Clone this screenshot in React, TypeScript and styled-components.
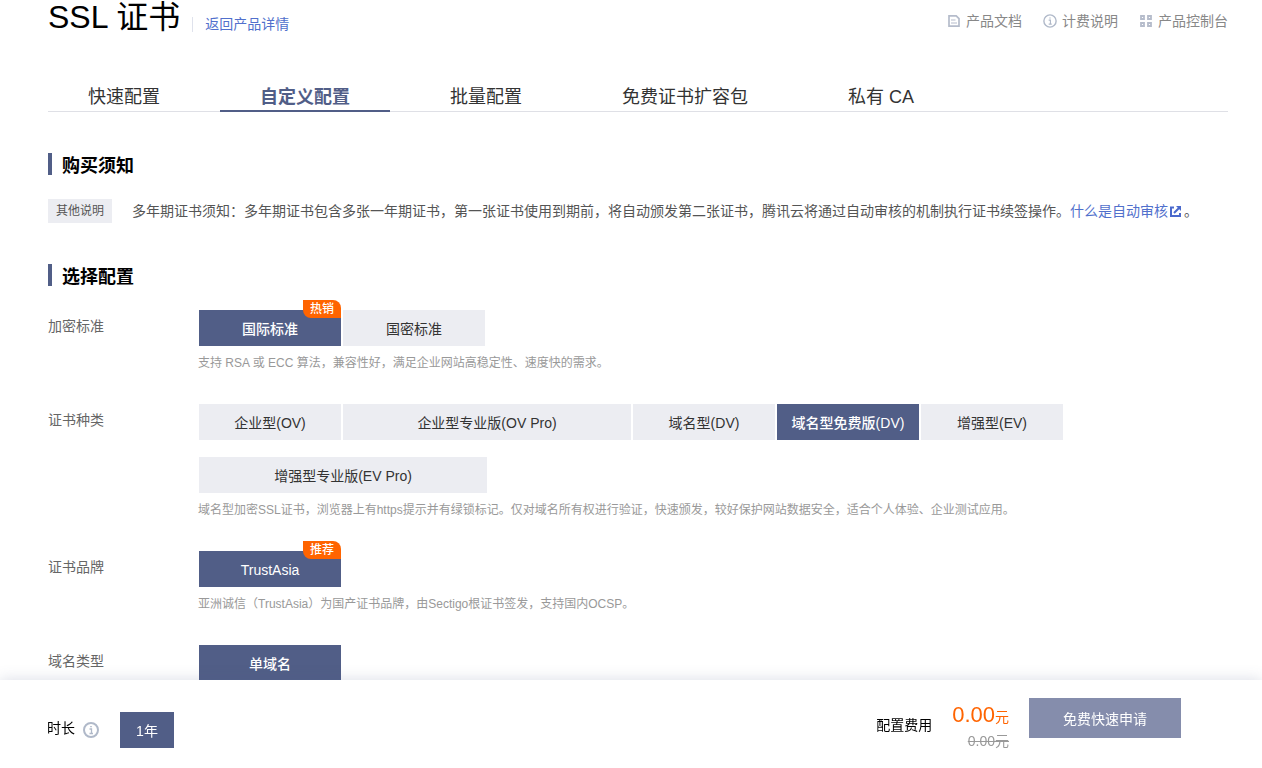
import React, { useState } from 'react';
import styled, { createGlobalStyle } from 'styled-components';

const GlobalStyle = createGlobalStyle`
  *, *::before, *::after { box-sizing: border-box; }
  body {
    margin: 0;
    background: #fff;
    color: #000;
    font: 14px/20px "Liberation Sans", "Noto Sans CJK SC", sans-serif;
  }
  button { font: inherit; border: 0; padding: 0; cursor: pointer; border-radius: 0; }
  h1, h2, p { margin: 0; }
`;

const Page = styled.main`
  padding: 0 34px 80px 48px;
`;

const Header = styled.header`
  display: flex;
  justify-content: space-between;
  align-items: flex-start;
  height: 82px;
`;

const TitleGroup = styled.div`
  display: flex;
  align-items: flex-start;
`;

const Title = styled.h1`
  font-size: 32px;
  line-height: 34px;
  font-weight: 400;
`;

const BackLink = styled.a`
  margin: 17px 0 0 12px;
  padding-left: 12px;
  border-left: 1px solid #dfe2ec;
  line-height: 15px;
  color: #5170cc;
  text-decoration: none;
`;

const HelpNav = styled.nav`
  display: flex;
  gap: 21px;
  padding-top: 12px;
`;

const HelpLink = styled.a`
  display: flex;
  align-items: center;
  gap: 5px;
  line-height: 18px;
  color: #888;
  text-decoration: none;
`;

const Tabs = styled.div`
  display: flex;
  gap: 20px;
  height: 30px;
  border-bottom: 1px solid #dfe0e6;
`;

const Tab = styled.button<{ $active: boolean }>`
  height: 30px;
  padding: 2px 40px 0;
  background: none;
  font-size: 18px;
  line-height: 26px;
  white-space: nowrap;
  font-weight: ${(p) => (p.$active ? 700 : 400)};
  color: ${(p) => (p.$active ? '#515e87' : '#333')};
  border-bottom: 2px solid ${(p) => (p.$active ? '#515e87' : 'transparent')};
`;

const Section = styled.section`
  margin-top: 41px;
`;

const SectionTitle = styled.h2`
  padding: 4px 0 0 10px;
  border-left: 4px solid #515e87;
  font-size: 18px;
  line-height: 18px;
  font-weight: 700;
`;

const Notice = styled.div`
  display: flex;
  align-items: flex-start;
  gap: 20px;
  margin-top: 24px;
  line-height: 24px;
  color: #555;
`;

const Tag = styled.span`
  flex: none;
  padding: 0 8px;
  background: #ecedf2;
  font-size: 12px;
`;

const TextLink = styled.a`
  color: #5170cc;
  text-decoration: none;

  svg { margin: 0 3px 0 2px; vertical-align: -1px; }
`;

const Fields = styled.div`
  display: grid;
  gap: 31px;
  margin-top: 24px;
`;

const Field = styled.div`
  display: grid;
  grid-template-columns: 150px 1fr;
`;

const FieldLabel = styled.span`
  padding-top: 6px;
  color: #666;
`;

const Options = styled.div`
  display: flex;
  flex-wrap: wrap;
  gap: 17px 2px;
  padding: 0 1px;
`;

const Option = styled.button<{ $active: boolean; $wide?: boolean }>`
  position: relative;
  width: ${(p) => (p.$wide ? 288 : 142)}px;
  height: 36px;
  padding-top: 2px;
  line-height: 34px;
  font-weight: ${(p) => (p.$active ? 500 : 400)};
  background: ${(p) => (p.$active ? '#515e87' : '#ecedf2')};
  color: ${(p) => (p.$active ? '#fff' : '#333')};
`;

const Badge = styled.span`
  position: absolute;
  top: -10px;
  right: 0;
  width: 38px;
  height: 18px;
  border-radius: 0 8px 0 8px;
  background: #ff6400;
  color: #fff;
  font-size: 12px;
  font-weight: 500;
  line-height: 18px;
  text-align: center;
`;

const Hint = styled.p`
  margin-top: 7px;
  color: #999;
  font-size: 12px;
`;

const Footer = styled.footer`
  position: fixed;
  right: 0;
  bottom: 0;
  left: 0;
  display: flex;
  justify-content: space-between;
  align-items: flex-start;
  height: 88px;
  padding: 18px 81px 0 47px;
  background: #fff;
  box-shadow: 0 0 14px rgba(81, 94, 135, 0.22);
`;

const Duration = styled.div`
  display: flex;
  align-items: center;
  gap: 8px;
  padding-top: 14px;
`;

const DurationLabel = styled.span`
  padding-bottom: 4px;
`;

const DurationOption = styled.button`
  width: 54px;
  height: 36px;
  padding-top: 2px;
  margin-left: 13px;
  background: #515e87;
  color: #fff;
`;

const Checkout = styled.div`
  display: flex;
  align-items: flex-start;
  gap: 20px;
`;

const CostLabel = styled.span`
  padding-top: 17px;
`;

const Prices = styled.div`
  text-align: right;
`;

const Price = styled.div`
  padding-top: 1px;
  color: #ff6400;
  line-height: 32px;
`;

const Amount = styled.span`
  font-size: 22px;
`;

const OldPrice = styled.del`
  display: block;
  line-height: 16px;
  color: #999;
`;

const Submit = styled.button`
  width: 152px;
  height: 40px;
  padding-top: 2px;
  background: #858dac;
  color: #fff;
`;

const DocIcon = () => (
  <svg width="14" height="14" viewBox="0 0 14 14" fill="none" stroke="#b5bccb" aria-hidden="true">
    <path d="M2 1.8h7.2L12 4.6v7.6H2z" strokeWidth="1.7" />
    <path d="M4 6h4.5M4 9h6" strokeWidth="1.2" />
  </svg>
);

const InfoIcon = ({ size, width }: { size: number; width: number }) => (
  <svg width={size} height={size} viewBox="0 0 16 16" fill="none" stroke="#b0b9c9" strokeWidth={width} aria-hidden="true">
    <circle cx="8" cy="8" r="7" />
    <path d="M6.5 7h2v4.5M6.5 11.5h3.5M7.2 4.6h1.6" strokeWidth="1.3" />
  </svg>
);

const GridIcon = () => (
  <svg width="14" height="14" viewBox="0 0 14 14" fill="none" stroke="#b5bccb" strokeWidth="1.8" aria-hidden="true">
    <path d="M2 2h3v3H2zM9 2h3v3H9zM2 9h3v3H2zM9 9h3v3H9z" />
  </svg>
);

const ExternalIcon = () => (
  <svg width="11" height="11" viewBox="0 0 11 11" fill="none" stroke="#4a69cc" strokeWidth="2" aria-hidden="true">
    <path d="M4 1.5H1V10h9V7M4 7l5-5" />
    <path d="M6 0h5v5z" fill="#4a69cc" stroke="none" />
  </svg>
);

const tabs = ['快速配置', '自定义配置', '批量配置', '免费证书扩容包', '私有 CA'];

type Choice = { text: string; wide?: boolean; badge?: string };
type FieldData = { label: string; choices: Choice[]; initial: number; hint?: string };

const fields: FieldData[] = [
  {
    label: '加密标准',
    choices: [{ text: '国际标准', badge: '热销' }, { text: '国密标准' }],
    initial: 0,
    hint: '支持 RSA 或 ECC 算法，兼容性好，满足企业网站高稳定性、速度快的需求。',
  },
  {
    label: '证书种类',
    choices: [
      { text: '企业型(OV)' },
      { text: '企业型专业版(OV Pro)', wide: true },
      { text: '域名型(DV)' },
      { text: '域名型免费版(DV)' },
      { text: '增强型(EV)' },
      { text: '增强型专业版(EV Pro)', wide: true },
    ],
    initial: 3,
    hint: '域名型加密SSL证书，浏览器上有https提示并有绿锁标记。仅对域名所有权进行验证，快速颁发，较好保护网站数据安全，适合个人体验、企业测试应用。',
  },
  {
    label: '证书品牌',
    choices: [{ text: 'TrustAsia', badge: '推荐' }],
    initial: 0,
    hint: '亚洲诚信（TrustAsia）为国产证书品牌，由Sectigo根证书签发，支持国内OCSP。',
  },
  { label: '域名类型', choices: [{ text: '单域名' }], initial: 0 },
];

function OptionField({ label, choices, initial, hint }: FieldData) {
  const [selected, setSelected] = useState(initial);
  return (
    <Field role="group" aria-label={label}>
      <FieldLabel>{label}</FieldLabel>
      <div>
        <Options>
          {choices.map((c, i) => (
            <Option
              key={c.text}
              type="button"
              $active={i === selected}
              $wide={c.wide}
              aria-pressed={i === selected}
              onClick={() => setSelected(i)}
            >
              {c.text}
              {c.badge && <Badge>{c.badge}</Badge>}
            </Option>
          ))}
        </Options>
        {hint && <Hint>{hint}</Hint>}
      </div>
    </Field>
  );
}

export default function App() {
  const [tab, setTab] = useState(1);
  return (
    <>
      <GlobalStyle />
      <Page>
        <Header>
          <TitleGroup>
            <Title>SSL 证书</Title>
            <BackLink href="#detail">返回产品详情</BackLink>
          </TitleGroup>
          <HelpNav>
            <HelpLink href="#docs"><DocIcon />产品文档</HelpLink>
            <HelpLink href="#billing"><InfoIcon size={14} width={1.6} />计费说明</HelpLink>
            <HelpLink href="#console"><GridIcon />产品控制台</HelpLink>
          </HelpNav>
        </Header>
        <Tabs role="tablist">
          {tabs.map((t, i) => (
            <Tab key={t} type="button" role="tab" aria-selected={i === tab} $active={i === tab} onClick={() => setTab(i)}>
              {t}
            </Tab>
          ))}
        </Tabs>
        <Section>
          <SectionTitle>购买须知</SectionTitle>
          <Notice>
            <Tag>其他说明</Tag>
            <p>
              多年期证书须知：多年期证书包含多张一年期证书，第一张证书使用到期前，将自动颁发第二张证书，腾讯云将通过自动审核的机制执行证书续签操作。
              <TextLink href="#review">什么是自动审核<ExternalIcon /></TextLink>。
            </p>
          </Notice>
        </Section>
        <Section>
          <SectionTitle>选择配置</SectionTitle>
          <Fields>
            {fields.map((f) => <OptionField key={f.label} {...f} />)}
          </Fields>
        </Section>
      </Page>
      <Footer>
        <Duration>
          <DurationLabel>时长</DurationLabel>
          <InfoIcon size={16} width={2} />
          <DurationOption type="button" aria-pressed="true">1年</DurationOption>
        </Duration>
        <Checkout>
          <CostLabel>配置费用</CostLabel>
          <Prices>
            <Price><Amount>0.00</Amount>元</Price>
            <OldPrice>0.00元</OldPrice>
          </Prices>
          <Submit type="button">免费快速申请</Submit>
        </Checkout>
      </Footer>
    </>
  );
}
